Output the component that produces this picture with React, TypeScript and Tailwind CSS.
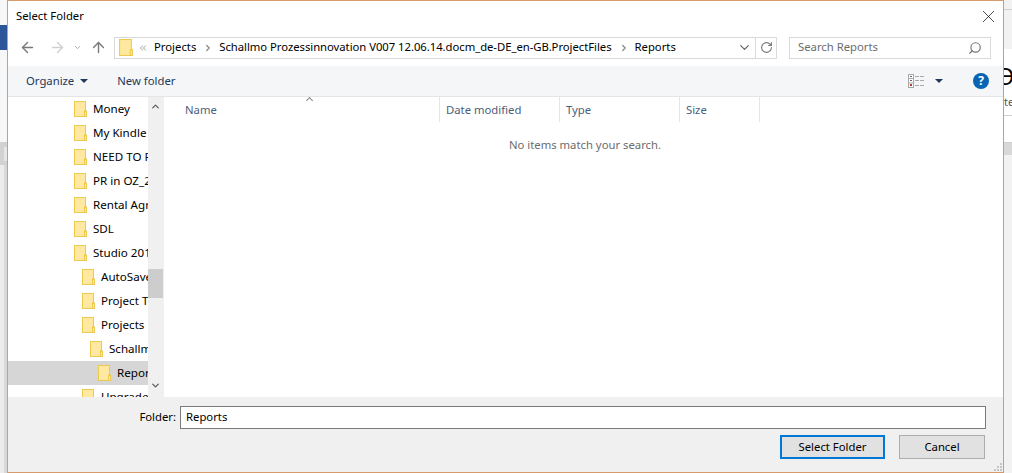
import React from "react";
import { ArrowLeft, ArrowRight, ArrowUp, ChevronDown, ChevronRight, ChevronUp, ChevronsLeft, RotateCw, Search, X } from "lucide-react";

const FolderIcon = ({ large = false }: { large?: boolean }) => (
  <svg width={large ? 14 : 13} height={large ? 17 : 16} viewBox="0 0 13 16" className="shrink-0">
    <rect x="0.5" y="0.5" width="11" height="15" fill="#ffe9a1" stroke="#eec94f" />
    <rect x="10.5" y="10" width="2" height="5.5" fill="#ffe9a1" stroke="#eec94f" />
  </svg>
);

const treeItems = [
  { label: "Money", indent: 66 },
  { label: "My Kindle Content", indent: 66 },
  { label: "NEED TO FILE", indent: 66 },
  { label: "PR in OZ_2016", indent: 66 },
  { label: "Rental Agreement", indent: 66 },
  { label: "SDL", indent: 66 },
  { label: "Studio 2015", indent: 66 },
  { label: "AutoSave", indent: 74 },
  { label: "Project Templates", indent: 74 },
  { label: "Projects", indent: 74 },
  { label: "Schallmo", indent: 82 },
  { label: "Reports", indent: 90, selected: true },
  { label: "Upgrade", indent: 74 },
];

const columns = [
  { label: "Name", width: "w-[276px]", pad: "pl-[21px]" },
  { label: "Date modified", width: "w-[120px]", pad: "pl-[6px]" },
  { label: "Type", width: "w-[120px]", pad: "pl-[6px]" },
  { label: "Size", width: "w-[80px]", pad: "pl-[6px]" },
];

const App = () => {
  return (
    <div className="flex h-[473px] w-[1012px] overflow-hidden bg-white text-[11.3px] text-[#000] [font-family:'Noto_Sans',sans-serif]">
      {/* window behind the dialog */}
      <div className="flex w-[7px] shrink-0 flex-col bg-[#f4f4f4]">
        <div className="h-[25px] bg-[#f7f7f7]" />
        <div className="h-[25px] bg-[#2b579a]" />
        <div className="h-[92px] bg-[#f7f7f7]" />
        <div className="flex h-[23px] items-center bg-[#d2d2d2]">
          <div className="ml-[4px] h-[14px] w-[3px] bg-[#e6e6e6]" />
        </div>
        <div className="flex flex-1 bg-[#ececec]">
          <div className="ml-[4px] w-[3px] bg-[#d8d8d8]" />
        </div>
      </div>

      <div className="flex h-[473px] w-[997px] shrink-0 flex-col border border-[#d79a6a] bg-white">
        <div className="flex h-[29px] shrink-0 items-center justify-between pl-[8px] pr-[4px] pt-[1px]">
          <span className="leading-none">Select Folder</span>
          <X size={21} strokeWidth={0.8} />
        </div>

        <div className="flex h-[36px] shrink-0 items-center pb-[1px] pl-[11px]">
          <ArrowLeft size={17} strokeWidth={2} className="text-[#7a7a7a]" />
          <ArrowRight size={17} strokeWidth={2} className="ml-[13px] text-[#d0d0d0]" />
          <ChevronDown size={9} strokeWidth={2.5} className="ml-[7px] text-[#a6a6a6]" />
          <ArrowUp size={17} strokeWidth={2} className="ml-[8px] text-[#7a7a7a]" />
          <div className="ml-[7px] flex h-[22px] w-[663px] items-center border border-[#d9d9d9]">
            <div className="ml-[4px]">
              <FolderIcon large />
            </div>
            <ChevronsLeft size={10} strokeWidth={2} className="ml-[5px] text-[#888]" />
            <span className="ml-[6px]">Projects</span>
            <ChevronRight size={10} strokeWidth={3} className="ml-[7px] text-[#888]" />
            <span className="ml-[6px] whitespace-nowrap tracking-[-0.04px]">Schallmo Prozessinnovation V007 12.06.14.docm_de-DE_en-GB.ProjectFiles</span>
            <ChevronRight size={10} strokeWidth={3} className="ml-[7px] text-[#888]" />
            <span className="ml-[6px]">Reports</span>
            <div className="ml-auto flex h-full w-[22px] items-center justify-center border-r border-[#d9d9d9]">
              <ChevronDown size={15} strokeWidth={2} className="text-[#666]" />
            </div>
            <div className="flex h-full w-[20px] items-center justify-center">
              <RotateCw size={13} strokeWidth={2} className="text-[#777]" />
            </div>
          </div>
          <div className="ml-[12px] flex h-[22px] w-[202px] items-center justify-between border border-[#d9d9d9] pl-[8px] pr-[8px]">
            <span className="text-[#6d6d6d]">Search Reports</span>
            <Search size={14} strokeWidth={2} className="-scale-x-100 text-[#777]" />
          </div>
        </div>

        <div className="flex h-[31px] shrink-0 items-center border-b border-[#e5e5e5] bg-[#f5f6f7] pl-[18px] pr-[14px]">
          <span className="text-[#1e395b]">Organize</span>
          <span className="ml-[6px] h-0 w-0 border-x-[4px] border-t-[4px] border-x-transparent border-t-[#1e395b]" />
          <span className="ml-[29px] text-[#1e395b]">New folder</span>
          <div className="ml-auto flex items-center">
            <svg width="17" height="14" viewBox="0 0 17 14">
              <rect x="0.5" y="0.5" width="5" height="13" fill="#fff" stroke="#a9a9a9" />
              <path d="M1 4.5h4M1 9h4" stroke="#a9a9a9" />
              <path d="M7 2.5h10M7 6.5h10M7 11.5h10" stroke="#a9a9a9" strokeDasharray="4 1" />
              <rect x="2" y="2" width="2" height="1" fill="#666" />
              <rect x="2" y="6" width="2" height="1" fill="#666" />
              <rect x="2" y="10" width="2" height="2" fill="#c0392b" />
            </svg>
            <span className="ml-[10px] h-0 w-0 border-x-[4px] border-t-[4px] border-x-transparent border-t-[#1e395b]" />
            <div className="ml-[30px] flex h-[16px] w-[16px] items-center justify-center rounded-full bg-[#0a64b4] text-[12px] font-bold leading-none text-white">
              ?
            </div>
          </div>
        </div>

        <div className="flex h-[300px] shrink-0 overflow-hidden">
          <div className="w-[140px] shrink-0 overflow-hidden">
            {treeItems.map((item) => (
              <div
                key={item.label}
                className={`flex h-[24px] shrink-0 items-center whitespace-nowrap ${item.selected ? "bg-[#d6d6d6]" : ""}`}
                style={{ paddingLeft: item.indent }}
              >
                <FolderIcon />
                <span className="mb-[1px] ml-[6px] text-[11.6px]">{item.label}</span>
              </div>
            ))}
          </div>
          <div className="flex w-[15px] shrink-0 flex-col items-center bg-[#f0f0f0] pt-[4px]">
            <ChevronUp size={11} strokeWidth={3} className="text-[#606060]" />
            <div className="mt-[157px] h-[29px] w-full bg-[#cdcdcd]" />
            <ChevronDown size={11} strokeWidth={3} className="mt-[82px] text-[#606060]" />
          </div>
          <div className="relative flex-1 border-l border-[#f0f0f0]">
            <span className="absolute left-[143px] top-[1px] h-[5px] w-[5px] rotate-45 border-l border-t border-[#8a8a8a]" />
            <div className="flex h-[25px]">
              {columns.map((col) => (
                <div key={col.label} className={`flex items-center border-r border-[#e5e5e5] pt-[2px] text-[#4c607a] ${col.width} ${col.pad}`}>
                  {col.label}
                </div>
              ))}
            </div>
            <div className="mt-[15px] w-[842px] text-center text-[#6d6d6d]">
              <span>No items match your search.</span>
            </div>
          </div>
        </div>

        <div className="relative flex flex-1 flex-col bg-[#f0f0f0] pt-[9px]">
          <div className="flex items-center">
            <span className="ml-[130px] w-[38px] text-right">Folder:</span>
            <div className="ml-[4px] flex h-[23px] w-[806px] items-center border border-[#7a7a7a] bg-white pl-[5px]">Reports</div>
          </div>
          <div className="mt-[6px] flex items-center pl-[772px]">
            <button className="h-[24px] w-[105px] border-[2px] border-[#0078d7] bg-[#e1e1e1]">Select Folder</button>
            <button className="ml-[14px] h-[24px] w-[86px] border border-[#adadad] bg-[#e1e1e1]">Cancel</button>
          </div>
          {/* resize grip */}
          <svg width="9" height="9" viewBox="0 0 9 9" className="absolute bottom-0 right-0">
            <path d="M6 0h2v2H6zM3 3h2v2H3zM6 3h2v2H6zM0 6h2v2H0zM3 6h2v2H3zM6 6h2v2H6z" fill="#c4c4c4" />
          </svg>
        </div>
      </div>

      <div className="flex w-[8px] shrink-0 flex-col overflow-hidden bg-[#f2f2f2]">
        <div className="h-[9px]" />
        <div className="h-[1px] bg-[#cfcfcf]" />
        <div className="h-[39px]" />
        <div className="h-[44px] overflow-hidden bg-white">
          <div className="-ml-[8px] text-[24px] leading-[56px] [font-family:'Liberation_Sans',sans-serif]">Ə</div>
        </div>
        <div className="h-[22px] bg-white text-[11px] leading-[18px] text-[#555]">te</div>
        <div className="h-[1px] bg-[#cfcfcf]" />
        <div className="h-[26px] bg-white" />
        <div className="h-[1px] bg-[#cfcfcf]" />
        <div className="h-[12px] bg-[#d8d8d8]" />
      </div>
    </div>
  );
};

export default App;
